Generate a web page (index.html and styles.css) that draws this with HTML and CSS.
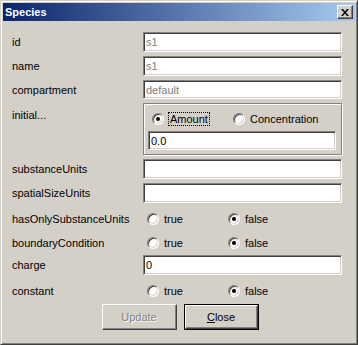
FILE: index.html
```html
<!DOCTYPE html>
<html lang="en">
<head>
  <meta charset="UTF-8">
  <title>Species</title>
  <link rel="stylesheet" href="styles.css">
</head>
<body>

  <div class="window">

    <!-- Title bar -->
    <div class="titlebar">
      <span class="title">Species</span>
      <div class="close-x">
        <svg width="8" height="7" viewBox="0 0 8 7">
          <path d="M0 0h2l2 2.5L6 0h2L5 3.5 8 7H6L4 4.5 2 7H0l3-3.5z" fill="#000"/>
        </svg>
      </div>
    </div>

    <!-- Form -->
    <div class="form">
      <div class="label">id</div>
      <div class="field disabled">s1</div>

      <div class="label">name</div>
      <div class="field disabled">s1</div>

      <div class="label">compartment</div>
      <div class="field disabled">default</div>

      <div class="label top">initial...</div>
      <div class="group">
        <div class="group-radios">
          <div class="opt"><span class="radio checked"></span><span class="focus">Amount</span></div>
          <div class="opt"><span class="radio"></span>Concentration</div>
        </div>
        <div class="field">0.0</div>
      </div>

      <div class="label">substanceUnits</div>
      <div class="field"></div>

      <div class="label">spatialSizeUnits</div>
      <div class="field"></div>

      <div class="label">hasOnlySubstanceUnits</div>
      <div class="radios">
        <div class="opt"><span class="radio"></span>true</div>
        <div class="opt"><span class="radio checked"></span>false</div>
      </div>

      <div class="label">boundaryCondition</div>
      <div class="radios">
        <div class="opt"><span class="radio"></span>true</div>
        <div class="opt"><span class="radio checked"></span>false</div>
      </div>

      <div class="label">charge</div>
      <div class="field">0</div>

      <div class="label">constant</div>
      <div class="radios">
        <div class="opt"><span class="radio"></span>true</div>
        <div class="opt"><span class="radio checked"></span>false</div>
      </div>
    </div>

    <!-- Buttons -->
    <div class="buttons">
      <div class="btn btn-disabled">Update</div>
      <div class="btn btn-default"><span class="btn-inner"><u>C</u>lose</span></div>
    </div>

  </div>

</body>
</html>
```

FILE: styles.css
```css
* {
  box-sizing: border-box;
}

body {
  margin: 0;
  font-family: 'Liberation Sans', Arial, sans-serif;
  font-size: 11px;
  color: #000;
  background: #d4d0c8;
}

.window {
  width: 358px;
  height: 345px;
  background: #d4d0c8;
  border: 1px solid;
  border-color: #d4d0c8 #404040 #404040 #d4d0c8;
  box-shadow: inset 1px 1px #fff, inset -1px -1px #808080;
  padding: 2px;
}

.titlebar {
  height: 18px;
  display: flex;
  align-items: center;
  justify-content: space-between;
  padding: 0 2px 0 2px;
  background: linear-gradient(to right, #0a246a, #a6caf0);
}

.title {
  color: #fff;
  font-weight: bold;
  font-size: 11px;
}

.close-x {
  width: 16px;
  height: 14px;
  display: flex;
  align-items: center;
  justify-content: center;
  background: #d4d0c8;
  border: 1px solid;
  border-color: #fff #404040 #404040 #fff;
  box-shadow: inset -1px -1px #808080;
}

.form {
  display: grid;
  grid-template-columns: 131px 199px;
  grid-template-rows: 20px 20px 19px 52px 20px 20px 24px 16px 20px 24px;
  row-gap: 4px;
  padding: 11px 13px 0 9px;
}

.label {
  display: flex;
  align-items: center;
}

.label.top {
  align-items: flex-start;
  padding-top: 6px;
}

.field {
  background: #fff;
  border: 1px solid;
  border-color: #808080 #fff #fff #808080;
  box-shadow: inset 1px 1px #404040, inset -1px -1px #d4d0c8;
  padding: 0 2px;
  display: flex;
  align-items: center;
}

.field.disabled {
  color: #808080;
}

.group {
  border: 1px solid #808080;
  box-shadow: inset 1px 1px #fff, 1px 1px #fff;
  padding: 0 5px 4px 4px;
  display: flex;
  flex-direction: column;
  justify-content: space-between;
}

.group .field {
  height: 19px;
}

.group-radios {
  display: grid;
  grid-template-columns: 81px 1fr;
  padding: 9px 0 0 4px;
}

.radios {
  display: grid;
  grid-template-columns: 81px 1fr;
  padding-left: 4px;
  align-items: center;
}

.opt {
  display: flex;
  align-items: center;
  gap: 5px;
}

.radio {
  position: relative;
  width: 12px;
  height: 12px;
  border-radius: 50%;
  background: #fff;
  border: 1px solid;
  border-color: #808080 #fff #fff #808080;
  box-shadow: inset 1px 1px #404040, inset -1px -1px #d4d0c8;
}

.radio.checked::after {
  content: "";
  position: absolute;
  left: 3px;
  top: 3px;
  width: 4px;
  height: 4px;
  border-radius: 50%;
  background: #000;
}

.focus {
  outline: 1px dotted #000;
  outline-offset: 0;
  padding: 0 1px;
}

.buttons {
  display: flex;
  justify-content: center;
  gap: 7px;
  margin-top: 1px;
  padding-left: 2px;
}

.btn {
  width: 75px;
  height: 26px;
  display: flex;
  align-items: center;
  justify-content: center;
  background: #d4d0c8;
  border: 1px solid;
  border-color: #fff #404040 #404040 #fff;
  box-shadow: inset -1px -1px #808080;
}

.btn-disabled {
  color: #808080;
  text-shadow: 1px 1px #fff;
}

.btn-default {
  border: 1px solid #000;
  box-shadow: none;
  padding: 0;
}

.btn-inner {
  width: 100%;
  height: 100%;
  display: flex;
  align-items: center;
  justify-content: center;
  border: 1px solid;
  border-color: #fff #404040 #404040 #fff;
  box-shadow: inset -1px -1px #808080;
}
```
